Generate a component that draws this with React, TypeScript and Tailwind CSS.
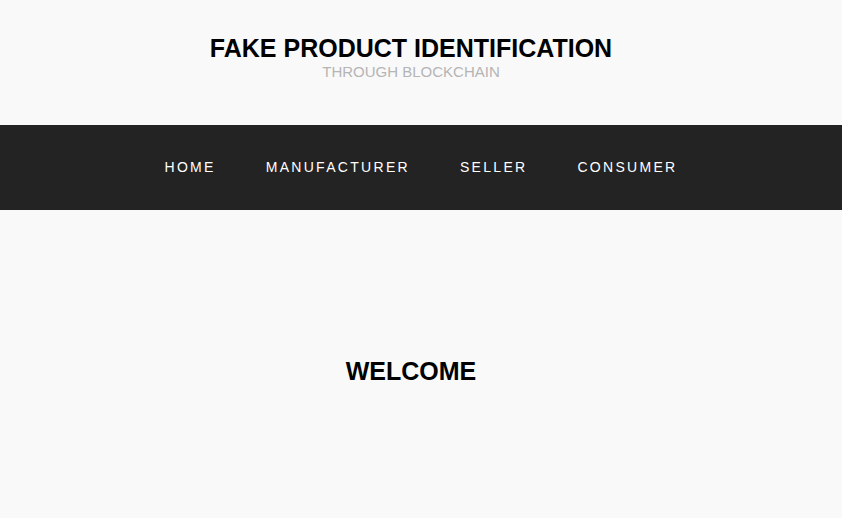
import React from "react";

export default function App() {
  const items = ["HOME", "MANUFACTURER", "SELLER", "CONSUMER"];
  return (
    <div
      className="min-h-[518px] w-full bg-[#f9f9f9]"
      style={{ fontFamily: '"Liberation Sans", Arial, sans-serif' }}
    >
      <header className="h-[125px] pt-[34px] pr-[20px] text-center">
        <h1 className="text-[25px] font-bold leading-[29px] text-black">
          FAKE PRODUCT IDENTIFICATION
        </h1>
        <p className="mt-[0px] text-[15px] leading-[17px] text-[#b5b5b5]">
          THROUGH BLOCKCHAIN
        </p>
      </header>
      <nav className="flex h-[85px] items-center justify-center bg-[#232323]">
        <ul className="flex">
          {items.map((it) => (
            <li key={it}>
              <a className="block px-[25px] text-[14px] tracking-[2.3px] text-white">
                {it}
              </a>
            </li>
          ))}
        </ul>
      </nav>
      <main className="pt-[147px] pr-[20px] text-center">
        <h2 className="text-[25px] font-bold leading-[29px] text-black">WELCOME</h2>
      </main>
    </div>
  );
}
